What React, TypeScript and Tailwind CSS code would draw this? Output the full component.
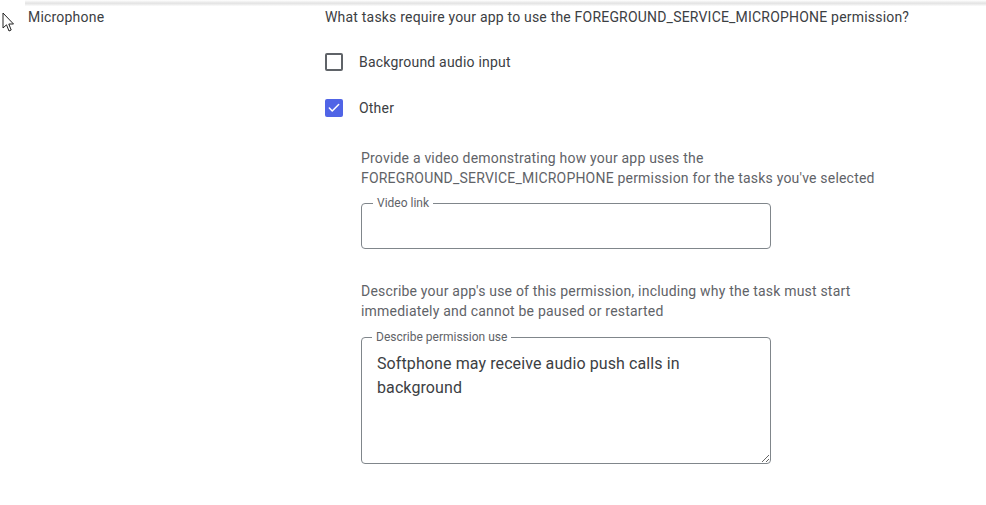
import { Check } from "lucide-react";

// Little arrow pointer sitting on the page edge
function Pointer() {
	return (
		<svg
			className="absolute left-[2px] top-[12px]"
			width="13"
			height="21"
			viewBox="0 0 13 21"
		>
			<path
				d="M1 1 L1 16 L4.5 12.8 L7 19 L9.2 18 L6.8 12 L11.5 12 Z"
				fill="#fff"
				stroke="#222"
				strokeWidth="1"
				strokeLinejoin="round"
			/>
		</svg>
	);
}

function Option({ label, checked }: { label: string; checked?: boolean }) {
	return (
		<div className="flex items-center h-5 gap-4">
			{checked ? (
				<span className="w-[18px] h-[18px] rounded-[2px] bg-[#5064e6] flex items-center justify-center">
					<Check size={14} strokeWidth={2.6} color="#fff" />
				</span>
			) : (
				<span className="w-[18px] h-[18px] rounded-[2px] border-2 border-[#5f6368]" />
			)}
			<span className="text-[14px] leading-5 tracking-[0.2px] text-[#3c4043]">
				{label}
			</span>
		</div>
	);
}

export default function App() {
	return (
		<div className="relative h-[505px] w-[986px] overflow-hidden bg-white font-['Roboto',sans-serif]">
			<Pointer />
			{/* faint edge of the card above */}
			<div className="ml-[25px] h-[6px] bg-[linear-gradient(to_bottom,#ffffff,#e3e3e3_55%,#fbfbfb)]" />

			<div className="flex pl-[28px] pt-[1px]">
				<div className="w-[297px] text-[14px] leading-5 tracking-[0.2px] text-[#3c4043]">
					Microphone
				</div>

				<div className="flex flex-col">
					<p className="text-[14px] leading-5 tracking-[0.2px] text-[#3c4043]">
						What tasks require your app to use the
						FOREGROUND_SERVICE_MICROPHONE permission?
					</p>

					<div className="mt-[25px] flex flex-col gap-[26px]">
						<Option label="Background audio input" />
						<Option label="Other" checked />
					</div>

					<div className="ml-[36px] mt-[30px] flex flex-col">
						<p className="w-[560px] text-[14px] leading-5 tracking-[0.2px] text-[#5f6368]">
							Provide a video demonstrating how your app uses the
							<br />
							FOREGROUND_SERVICE_MICROPHONE permission for the tasks you've
							selected
						</p>

						<div className="relative mt-[15px] w-[410px] h-[46px] rounded-[4px] border border-[#80868b]">
							<span className="absolute left-[11px] top-[-9px] bg-white px-[4px] text-[12px] leading-4 text-[#5f6368]">
								Video link
							</span>
						</div>

						<p className="mt-[32px] w-[560px] text-[14px] leading-5 tracking-[0.2px] text-[#5f6368]">
							Describe your app's use of this permission, including why the
							task must start
							<br />
							immediately and cannot be paused or restarted
						</p>

						<div className="relative mt-[16px] w-[410px]">
							<textarea
								className="block w-[410px] h-[127px] rounded-[4px] border border-[#80868b] pl-[15px] pr-[40px] pt-[14px] text-[16px] leading-6 tracking-[0.1px] text-[#3c4043] outline-none"
								defaultValue="Softphone may receive audio push calls in background"
							/>
							<span className="absolute left-[11px] top-[-8px] bg-white px-[4px] text-[12px] leading-4 text-[#5f6368]">
								Describe permission use
							</span>
						</div>
					</div>
				</div>
			</div>
		</div>
	);
}
